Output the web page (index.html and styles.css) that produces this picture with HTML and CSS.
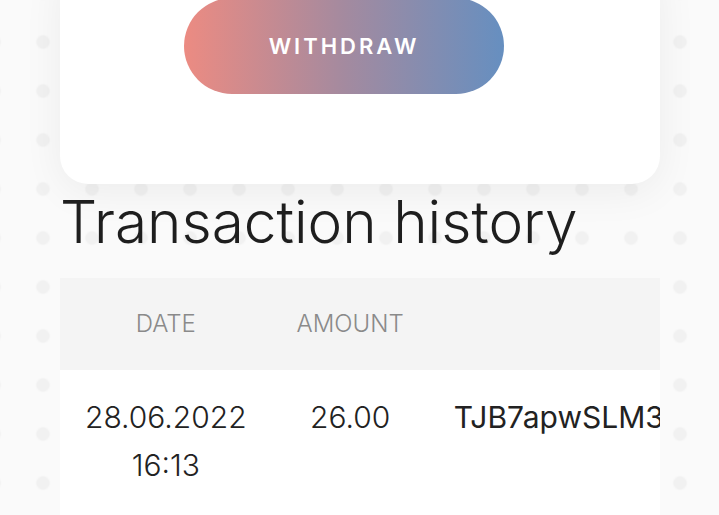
FILE: index.html
```html
<!DOCTYPE html>
<html lang="en">
<head>
    <meta charset="UTF-8" />
    <title>Wallet</title>
    <link rel="stylesheet" href="styles.css">
</head>
<body>
    <div class="page">
        <div class="card">
            <button class="withdrawBtn">Withdraw</button>
        </div>

        <h2>Transaction history</h2>

        <div class="tableWrap">
            <table class="history">
                <thead>
                    <tr>
                        <th>Date</th>
                        <th>Amount</th>
                        <th></th>
                    </tr>
                </thead>
                <tbody>
                    <tr>
                        <td class="light">28.06.2022<br>16:13</td>
                        <td class="light">26.00</td>
                        <td class="address">TJB7apwSLM3xQ9kVr2hYtN5eWcU8fDz4Ls</td>
                    </tr>
                </tbody>
            </table>
        </div>
    </div>
</body>
</html>
```

FILE: styles.css
```css
* {
    box-sizing: border-box;
}

body {
    margin: 0;
    font-family: Inter, 'Open Sans', sans-serif;
    color: #222;
    background-color: #fafafa;
    background-image: radial-gradient(circle, #f1f1f1 6px, rgba(241, 241, 241, 0) 7.5px);
    background-size: 49px 49px;
    background-position: 18.5px 17.5px;
    overflow: hidden;
}

.page {
    padding: 0 59px 0 60px;
}

.card {
    margin-top: -40px;
    padding: 38px 0 90px 124px;
    background: #fff;
    border-radius: 28px;
    box-shadow: 0 8px 40px rgba(0, 0, 0, 0.06);
}

.withdrawBtn {
    display: block;
    width: 320px;
    height: 96px;
    border: none;
    border-radius: 48px;
    background: linear-gradient(to right, #ec8b82, #a48a9f 50%, #668fc0);
    color: #fff;
    font-family: Inter, sans-serif;
    font-size: 22px;
    font-weight: 600;
    letter-spacing: 3px;
    text-transform: uppercase;
    cursor: pointer;
}

h2 {
    margin: 2px 0 20px;
    font-size: 58.5px;
    font-weight: 300;
    line-height: 72px;
    color: #1e1e1e;
}

.tableWrap {
    width: 600px;
    overflow: hidden;
}

.history {
    border-collapse: collapse;
    background: #fff;
}

    .history th {
        background: #f4f4f4;
        padding: 30px 25px;
        font-size: 24px;
        line-height: 32px;
        font-weight: 300;
        color: #8a8a8a;
        text-transform: uppercase;
        white-space: nowrap;
    }

    .history td {
        padding: 23px 25px 40px;
        font-size: 30px;
        line-height: 48px;
        font-weight: 400;
        text-align: center;
        vertical-align: top;
        white-space: nowrap;
    }

        .history td.light {
            font-weight: 300;
        }

        .history td.address {
            text-align: left;
            padding-right: 120px;
        }
```
